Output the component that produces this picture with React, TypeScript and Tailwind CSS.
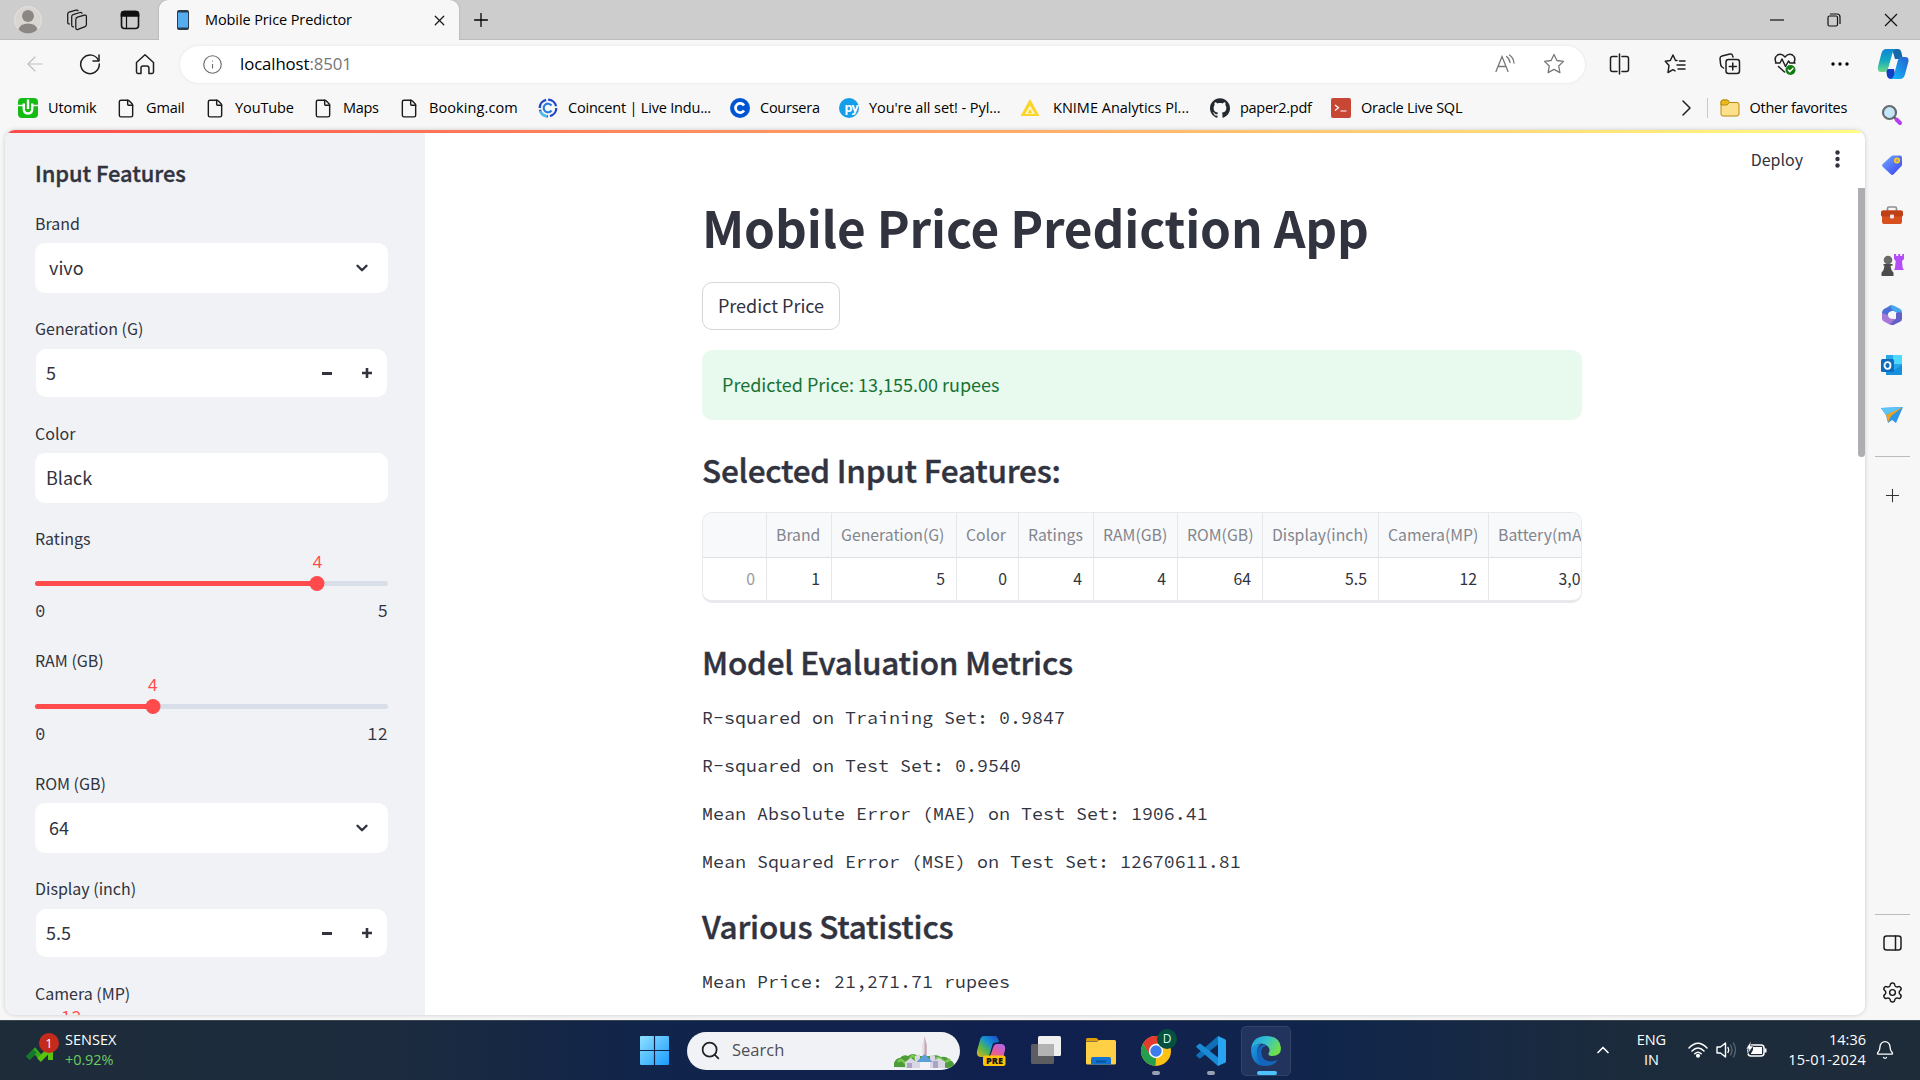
import React from 'react';
import { File, Search, Plus, X, Settings, ChevronDown, ChevronUp, Bell, ArrowLeft, Info } from 'lucide-react';
import { SiGithub } from 'react-icons/si';

const ui = "font-['Open_Sans','Noto_Sans',sans-serif]";
const app = "font-['Noto_Sans_CJK_SC','Noto_Sans',sans-serif]";
const mono = "font-['Source_Code_Pro','Liberation_Mono',monospace]";

/* ---------- browser chrome ---------- */

function TabBar() {
  return (
    <div className="flex h-10 shrink-0 bg-[#cdcdcd] shadow-[inset_0_-1px_0_#bdbdbd]">
      <div className="flex w-[159px] items-center pl-[14px]">
        <svg width="28" height="28" viewBox="0 0 28 28">
          <circle cx="14" cy="14" r="13.5" fill="#d9d6d2" stroke="#e4e2df" />
          <circle cx="14" cy="10" r="6" fill="#8b8784" />
          <path d="M4.5 23.5Q6 17.500 14 17.500t9.500 6Q19.500 27.500 14 27.500t-9.500-4z" fill="#8b8784" />
        </svg>
        <svg className="ml-[24px]" width="22" height="22" viewBox="0 0 22 22" fill="none" stroke="#1b1b1b" strokeWidth="1.250" strokeLinejoin="round">
          <path d="M11.500 8.200 18.500 6.200q1.900-.4 1.900 1.400v8.200q0 1.400-1.300 1.800L12 20.400q-2.200.7-2.200-1.600V10.400q0-1.600 1.700-2.200z" />
          <path d="M8 17.700q-2.300.4-2.300-1.700V7.500q0-1.500 1.400-1.900L14 3.500q1.600-.4 2.300 1.200" />
          <path d="M3.900 14.900q-2.200.4-2.200-1.700V5q0-1.400 1.300-1.900L10 1.100q1.600-.4 2.300 1" />
        </svg>
        <svg className="ml-[32px]" width="20" height="20" viewBox="0 0 20 20" fill="none" stroke="#111" strokeWidth="1.600">
          <rect x="1.500" y="1.500" width="17" height="17" rx="3" />
          <path d="M1.500 6V4q0-2.500 2.500-2.500h12q2.500 0 2.500 2.500v2z" fill="#111" />
          <path d="M6.500 6v12" strokeWidth="1.200" />
        </svg>
      </div>
      <div className="flex w-[300px] items-center rounded-t-[9px] bg-[#f7f7f7] pl-[18px] pr-[11px] shadow-[0_0_2px_#999]">
        <svg width="12" height="20" viewBox="0 0 12 20">
          <rect width="12" height="20" rx="2" fill="#2b3b47" />
          <rect x="1" y="2.500" width="10" height="15" fill="#55acee" />
        </svg>
        <span className={`${ui} ml-4 flex-1 whitespace-nowrap text-[14.500px] tracking-[-0.1px] text-black`}>Mobile Price Predictor</span>
        <X size={17} strokeWidth={1.8} className="text-[#1b1b1b]" />
      </div>
      <div className="flex items-center pl-[11px]"><Plus size={22} strokeWidth={1.400} /></div>
      <div className="ml-auto flex items-center">
        <div className="flex w-[57px] justify-center"><svg width="14" height="2"><path d="M0 1h14" stroke="#111" strokeWidth="1.200" /></svg></div>
        <div className="flex w-[57px] justify-center">
          <svg width="14" height="14" viewBox="0 0 14 14" fill="none" stroke="#111" strokeWidth="1.200">
            <rect x="1" y="3" width="9.500" height="10" rx="1.500" /><path d="M3 1h7q3 0 3 3v7" />
          </svg>
        </div>
        <div className="flex w-[58px] justify-center"><svg width="14" height="14" viewBox="0 0 14 14"><path d="m1 1 12 12M13 1 1 13" stroke="#111" strokeWidth="1.200" /></svg></div>
      </div>
    </div>
  );
}

const stroke = { fill: 'none', stroke: '#1f1f1f', strokeWidth: 1.5, strokeLinecap: 'round' as const, strokeLinejoin: 'round' as const };

function Toolbar() {
  return (
    <div className="flex h-12 shrink-0 items-center bg-[#f7f7f7]">
      <div className="flex w-[180px] items-center pl-[23px]">
        <ArrowLeft size={24} strokeWidth={1.100} className="text-[#bdbdbd]" />
        <svg className="ml-[32px]" width="22" height="22" viewBox="0 0 22 22" {...stroke}>
          <path d="M19.500 7.500A9.300 9.300 0 1 0 20.300 11" /><path d="M20 2v6h-6" />
        </svg>
        <svg className="ml-[34px]" width="20" height="22" viewBox="0 0 20 22" {...stroke}>
          <path d="M1.500 9.500 10 1.800l8.500 7.700V19q0 1.400-1.400 1.400h-3.200V15q0-2-2-2H8q-2 0-2 2v5.400H2.900Q1.500 20.400 1.500 19z" />
        </svg>
      </div>
      <div className="flex h-[37px] w-[1405px] items-center rounded-full bg-white pl-[22px] pr-[20px] shadow-[0_0_3px_#e2e2e2]">
        <Info size={21} strokeWidth={1.300} className="text-[#6b6b6b]" />
        <span className={`${ui} ml-[17px] flex-1 text-[16.800px] tracking-[-0.1px] text-black`}>localhost<span className="text-[#767676]">:8501</span></span>
        <svg width="20" height="20" viewBox="0 0 20 20" fill="none" stroke="#777" strokeWidth="1.300" strokeLinecap="round">
          <path d="m1 17.500 6-15 6 15M3 12.500h8M11.500 2.500q3 2 3.500 6M14.500 1q4 2.800 4.500 8" />
        </svg>
        <svg className="ml-[28px]" width="22" height="22" viewBox="0 0 22 22" fill="none" stroke="#777" strokeWidth="1.300" strokeLinejoin="round"><path d="m11 1.500 2.900 6 6.600.9-4.800 4.600 1.200 6.600-5.900-3.200-5.900 3.200L6.300 13 1.500 8.400l6.600-.9z" /></svg>
      </div>
      <div className="flex flex-1 items-center pl-[24px]">
        <svg width="21" height="22" viewBox="0 0 21 22" {...stroke}><path d="M8 3.500H3.500Q1.500 3.500 1.500 5.500v11q0 2 2 2H8M13 3.500h4.500q2 0 2 2v11q0 2-2 2H13M10.500 1v20" /></svg>
        <svg className="ml-[34px]" width="22" height="22" viewBox="0 0 22 22" {...stroke}>
          <path d="M13 7.500h-1.500L9 2 6.300 7.500l-5 .8L5 12.500 4 19.500l5-2.800 2 1.200M15.500 8H21M13 12h8M14 16h7" />
        </svg>
        <svg className="ml-[33px]" width="22" height="22" viewBox="0 0 22 22" {...stroke}>
          <path d="M4.500 15 3 14Q1.500 12.500 1.500 10.500L1 5.500Q1 3.500 3 3l8-2q2-.5 2.500 1.500l.5 1.500" /><rect x="7" y="6.500" width="13.500" height="14" rx="2.500" /><path d="M13.750 10v7M10.300 13.500h7" />
        </svg>
        <svg className="ml-[33px]" width="23" height="24" viewBox="0 0 23 24" {...stroke}>
          <path d="M1.800 10Q0 5.500 3.500 3 7.500 1 11 5q3.500-4 7.500-2 3.500 2.500 1.700 7M1.500 11H6l2-4 3.500 7.500 3-5.500 1.500 2h5M4.500 14.500 10.500 20" />
          <circle cx="16.500" cy="18" r="5" fill="#107c10" stroke="none" /><path d="m14.300 18 1.600 1.600 3-3.200" stroke="#fff" />
        </svg>
        <svg className="ml-[34px]" width="18" height="4" viewBox="0 0 18 4"><circle cx="2" cy="2" r="1.700" /><circle cx="9" cy="2" r="1.700" /><circle cx="16" cy="2" r="1.700" /></svg>
        <svg className="ml-[28px]" width="32" height="30" viewBox="0 0 32 30">
          <defs>
            <linearGradient id="cpA" x1="0" y1="0" x2="0" y2="1"><stop stopColor="#0f86d6" /><stop offset=".5" stopColor="#13a9bf" /><stop offset="1" stopColor="#6fd987" /></linearGradient>
            <linearGradient id="cpB" x1="1" y1="0" x2="0" y2="1"><stop stopColor="#2560d0" /><stop offset="1" stopColor="#12c0fb" /></linearGradient>
          </defs>
          <path d="M9 20h8l2 10h-5q-3 0-4-3z" fill="#1240c4" />
          <path d="M15 0h6q2.500 0 3.300 3l1.700 7h-8z" fill="#1668a8" />
          <path d="M9 0h10q-2.500.5-3.500 4l-4 14q-1.200 5-4.500 5H4Q0 23 1 17.500L4.500 4Q6 0 9 0z" fill="url(#cpA)" />
          <path d="M23 8h5q4.300 0 3.300 5L28 25.500q-1.500 4.500-5 4.500H12.500q3.500 0 4.500-4l3.500-13.500q.8-3.500 2.500-4.500z" fill="url(#cpB)" />
        </svg>
      </div>
    </div>
  );
}

const PageIcon = () => <File size={21} strokeWidth={1.700} className="text-[#1b1b1b]" />;

const bookmarks = [
  { t: 'Utomik', w: 'w-[98px]', k: 'tracking-[-0.1px]', i: <svg width="20" height="20" viewBox="0 0 20 20"><rect width="20" height="20" rx="4" fill="#13bb13" /><path d="M0 7.500h5M15 7.500h5" stroke="#f7f7f7" strokeWidth="1.500" /><path d="M5.800 5.500V11q0 4.500 4.200 4.500t4.200-4.500V5.500M10 1.500V11" stroke="#fff" strokeWidth="2.400" fill="none" /></svg> },
  { t: 'Gmail', w: 'w-[89px]', k: 'tracking-[-0.15px]', i: <PageIcon /> },
  { t: 'YouTube', w: 'w-[108px]', k: 'tracking-[-0.1px]', i: <PageIcon /> },
  { t: 'Maps', w: 'w-[86px]', k: 'tracking-[-0.3px]', i: <PageIcon /> },
  { t: 'Booking.com', w: 'w-[139px]', k: 'tracking-[0.1px]', i: <PageIcon /> },
  { t: 'Coincent | Live Indu...', w: 'w-[192px]', k: 'tracking-[-0.2px]', i: <svg width="20" height="20" viewBox="0 0 20 20" fill="none"><circle cx="10" cy="10" r="8.300" stroke="#2346c8" strokeWidth="2.300" strokeDasharray="11 2" /><path d="M13.500 7.500a4.300 4.300 0 1 0 0 5" stroke="#2a7fd8" strokeWidth="2.200" /><path d="M2 13a8.500 8.500 0 0 0 7 5.300" stroke="#4bc1e8" strokeWidth="2.300" /></svg> },
  { t: 'Coursera', w: 'w-[109px]', k: 'tracking-[-0.25px]', i: <svg width="20" height="20" viewBox="0 0 20 20"><circle cx="10" cy="10" r="10" fill="#0056d2" /><path d="M14 7.500a4.600 4.600 0 1 0 0 5" stroke="#fff" strokeWidth="2.700" fill="none" /></svg> },
  { t: "You're all set! - Pyl...", w: 'w-[181px]', k: 'tracking-[-0.07px]', i: <svg width="20" height="20" viewBox="0 0 20 20"><circle cx="10" cy="10" r="10" fill="#149eea" /><text x="5.500" y="14" fontSize="12.500" fontWeight="700" fontFamily="Open Sans" fill="#fff" textLength="14">py</text></svg> },
  { t: 'KNIME Analytics Pl...', w: 'w-[190px]', k: 'tracking-[0px] pl-[3px]', i: <svg width="20" height="20" viewBox="0 0 20 20"><path d="M10 1 19.500 18H.5z" fill="#fbd42a" /><path d="M10 7.500 15 16H5z" fill="#fff7d0" /><path d="m10 11 2.500 4.300h-5z" fill="#fbd42a" /></svg> },
  { t: 'paper2.pdf', w: 'w-[121px]', k: 'tracking-[-0.3px]', i: <SiGithub size={20} color="#24292f" /> },
  { t: 'Oracle Live SQL', w: 'w-[150px]', k: 'tracking-[-0.25px]', i: <svg width="20" height="20" viewBox="0 0 20 20"><rect width="20" height="20" rx="2" fill="#c74634" /><path d="m4 7 3.500 2.700L4 12.500M9.500 13h6" stroke="#fff" strokeWidth="1.200" fill="none" /></svg> },
];

function BookmarksBar() {
  return (
    <div className={`${ui} flex h-[42px] shrink-0 items-center pb-0.5 pl-[18px] text-[14.500px] text-black`}>
      {bookmarks.map((b) => (
        <div key={b.t} className={`${b.w} flex shrink-0 items-center whitespace-nowrap`}>
          <span className="flex w-5 shrink-0 justify-center">{b.i}</span>
          <span className={`ml-[10px] ${b.k}`}>{b.t}</span>
        </div>
      ))}
      <div className="ml-auto flex items-center pr-[18px]">
        <svg width="9" height="16" viewBox="0 0 9 16" {...stroke}><path d="m1 1 7 7-7 7" /></svg>
        <span className="ml-[16px] h-5 w-px bg-[#c8c8c8]" />
        <svg className="ml-[12px]" width="20" height="18" viewBox="0 0 20 18">
          <path d="M1 4V3q0-2 2-2h4.500l2 2.500H17q2 0 2 2V15q0 2-2 2H3q-2 0-2-2z" fill="#ffe08a" stroke="#b98a10" />
          <path d="M1 6V3q0-2 2-2h4.500l2 2.300L7 6z" fill="#edb81c" stroke="#b98a10" />
        </svg>
        <span className="ml-[10px] whitespace-nowrap tracking-[-0.3px]">Other favorites</span>
      </div>
    </div>
  );
}

/* ---------- edge side rail ---------- */

const railIcons = [
  <svg key="s" width="22" height="22" viewBox="0 0 22 22"><circle cx="8.500" cy="8.500" r="6.500" fill="#c4e6fb" stroke="#666b70" strokeWidth="2.200" /><path d="m13.300 13.300 2 2" stroke="#555" strokeWidth="2" /><path d="m15.500 15.500 3.500 3.500" stroke="#b63df0" strokeWidth="4" strokeLinecap="round" /></svg>,
  <svg key="t" width="22" height="22" viewBox="0 0 22 22"><defs><linearGradient id="tg" x1="0" x2="1" y1="0" y2="1"><stop stopColor="#6fb0ff" /><stop offset="1" stopColor="#3a3cf0" /></linearGradient></defs><path d="M12 1.500h7q2 0 2 2v7q0 1-.8 1.800l-7.500 8q-1.500 1.400-3 0l-8-7.500q-1.400-1.400 0-2.800l8.500-7.800q.8-.7 1.800-.7z" fill="url(#tg)" /><circle cx="16" cy="6.500" r="2.200" fill="#99a" stroke="#ffc91f" strokeWidth="1.700" /></svg>,
  <svg key="b" width="24" height="20" viewBox="0 0 24 20"><path d="M7.500 6V3.500q0-1.500 1.500-1.500h6q1.500 0 1.500 1.500V6" fill="none" stroke="#8a8f94" strokeWidth="1.700" /><rect x="2" y="5.500" width="20" height="13.500" rx="2" fill="#d9501f" /><path d="M1 7q0-1.500 1.500-1.500h19Q23 5.500 23 7v3q0 1.500-1.500 1.500h-19Q1 11.500 1 10z" fill="#bf3f17" /><rect x="10" y="9.500" width="4" height="4" rx="1" fill="#e8e8e8" /></svg>,
  <svg key="c" width="24" height="24" viewBox="0 0 24 24"><path d="M14 1h2.200v2h2V1h2v2h2V1H24v5l-2 2 .7 7 1.300 2H14l1-2 .7-7-1.700-2z" fill="#b44df5" /><circle cx="8" cy="7" r="4.300" fill="#6a6a6a" /><path d="M3.500 11h9v1.700h-2q.3 4.500 3 7V23h-12v-3.300q2.700-2.500 3-7h-1z" fill="#4c4c4c" /></svg>,
  <svg key="m" width="22" height="22" viewBox="0 0 22 22"><path d="M7.500 2.500Q10 .5 12.500 1.500l6.500 3.300q2 1.200 2 3.200v3.500l-6.500-3.500L11 6.500z" fill="#45a8ee" /><path d="M11 .8 4 4.500Q1 6 1 9v6l4.500-.5 2-5.500L12 6.500 9.500 3z" fill="#4b6fd8" /><path d="M1 9v5.500q0 2 2 3l6 3.200q2 1 4-.2l1-5.500-4-1-3-3z" fill="#a878d6" /><path d="M21 9v6q0 1.500-1.500 2.500l-7 3.500-3.500-1 6-5.500V9l3-1z" fill="#6060c8" /><circle cx="11" cy="11" r="3.800" fill="#f7f7f7" /></svg>,
  <svg key="o" width="22" height="22" viewBox="0 0 22 22"><path d="M5 1h15q1 0 1 1v18q0 1-1 1H5z" fill="#28a8ea" /><path d="M12 1h9v9h-9z" fill="#50d9ff" /><path d="m5 12 8 4 8-5v9q0 1-1 1H6q-1 0-1-1z" fill="#1490df" /><rect y="5" width="13" height="13" rx="1.500" fill="#0f6cbd" /><ellipse cx="6.500" cy="11.500" rx="3" ry="3.300" fill="none" stroke="#fff" strokeWidth="1.800" /></svg>,
  <svg key="p" width="24" height="20" viewBox="0 0 24 20"><path d="M1 3 23 2 16 18l-4-3-4 3-2-8z" fill="#2b96ea" /><path d="M1 3 23 2 6 10z" fill="#5cc4f8" /><path d="M23 2 6 10l2.500 7L11 11z" fill="#f2a31d" /></svg>,
];

function SideRail() {
  return (
    <div className="flex w-[55px] shrink-0 flex-col items-center pr-px pt-0.5">
      {railIcons.map((ic, n) => <div key={n} className="flex h-[50px] items-center">{ic}</div>)}
      <div className="mt-[16px] h-px w-[35px] bg-[#bcbcbc]" />
      <Plus size={21} strokeWidth={1.200} className="mt-[28px] text-[#333]" />
      <div className="mt-auto h-px w-[35px] bg-[#bcbcbc]" />
      <svg className="mb-[30px] mt-[20px]" width="19" height="16" viewBox="0 0 19 16" {...stroke}><rect x="1" y="1" width="17" height="14" rx="2.500" /><path d="M12.500 1v14" /></svg>
      <Settings size={23} strokeWidth={1.500} className="mb-[16px] text-[#1b1b1b]" />
    </div>
  );
}

/* ---------- input sidebar ---------- */

function Field({ label, children }: { label: string; children: React.ReactNode }) {
  return (
    <div className="h-[105px] shrink-0">
      <div className="flex h-7 items-center pt-0.5 text-[16px]">{label}</div>
      {children}
    </div>
  );
}

function SelectBox({ label, value }: { label: string; value: string }) {
  return (
    <Field label={label}>
      <div className="mt-[7px] flex h-[50px] items-center justify-between rounded-[10px] bg-white pb-px pl-[14px] pr-[17px] text-[18px]">
        {value}
        <ChevronDown size={18} strokeWidth={3.200} />
      </div>
    </Field>
  );
}

function NumberBox({ label, value }: { label: string; value: string }) {
  return (
    <Field label={label}>
      <div className="mx-px mt-2 flex h-12 items-center rounded-[10px] bg-white pl-[10px] text-[18px]">
        <span className="flex-1 pb-0.5">{value}</span>
        <span className="flex w-10 justify-center"><span className="h-[3px] w-[10px] bg-[#31333f]" /></span>
        <span className="flex w-10 justify-center"><svg width="10" height="10" viewBox="0 0 10 10"><path d="M0 5h10M5 0v10" stroke="#31333f" strokeWidth="2.600" /></svg></span>
      </div>
    </Field>
  );
}

function SliderBox({ label, value, max }: { label: string; value: number; max: number }) {
  const pct = `${(value / max) * 100}%`;
  return (
    <div className="h-[122.500px] shrink-0">
      <div className="flex h-7 items-center pt-px text-[16px]">{label}</div>
      <div className="relative h-[22px]">
        <span className={`${mono} absolute -translate-x-1/2 text-[17.500px] leading-[22px] text-[#ff4b4b]`} style={{ left: pct }}>{value}</span>
      </div>
      <div className="relative mt-2 h-[5px] rounded-full bg-[#d9dfe9]">
        <div className="h-full rounded-full bg-[#ff4b4b]" style={{ width: pct }} />
        <div className="absolute -top-[5px] size-[15px] -translate-x-1/2 rounded-full bg-[#ff4b4b]" style={{ left: pct }} />
      </div>
      <div className={`${mono} mt-[14px] flex h-[23px] items-center justify-between text-[17.500px]`}>
        <span>0</span><span>{max}</span>
      </div>
    </div>
  );
}

function InputSidebar() {
  return (
    <div className="flex w-[420px] shrink-0 flex-col overflow-hidden bg-[#f0f2f6] pl-[30px] pr-[37px]">
      <div className="flex h-[78px] shrink-0 items-center pt-[8px] text-[21.900px] font-medium tracking-[-0.05px] [-webkit-text-stroke:0.35px_#31333f]">Input Features</div>
      <SelectBox label="Brand" value="vivo" />
      <NumberBox label="Generation (G)" value="5" />
      <Field label="Color">
        <div className="mt-[7px] flex h-[50px] items-center rounded-[10px] bg-white pb-px pl-[11px] text-[18px]">Black</div>
      </Field>
      <SliderBox label="Ratings" value={4} max={5} />
      <SliderBox label="RAM (GB)" value={4} max={12} />
      <SelectBox label="ROM (GB)" value="64" />
      <NumberBox label="Display (inch)" value="5.5" />
      <SliderBox label="Camera (MP)" value={12} max={117} />
    </div>
  );
}

/* ---------- main content ---------- */

const columns = [
  { h: '', v: '0', w: 'w-[64px]' },
  { h: 'Brand', v: '1', w: 'w-[65px]' },
  { h: 'Generation(G)', v: '5', w: 'w-[125px]' },
  { h: 'Color', v: '0', w: 'w-[62px]' },
  { h: 'Ratings', v: '4', w: 'w-[75px]' },
  { h: 'RAM(GB)', v: '4', w: 'w-[84px]' },
  { h: 'ROM(GB)', v: '64', w: 'w-[85px]' },
  { h: 'Display(inch)', v: '5.5', w: 'w-[116px]' },
  { h: 'Camera(MP)', v: '12', w: 'w-[110px]' },
  { h: 'Battery(mAh)', v: '3,000', w: 'w-[121px]' },
];

function DataTable() {
  return (
    <div className="flex h-[91px] overflow-hidden rounded-[10px] border border-b-[3px] border-[#e8e9ed] text-[15.800px]">
      {columns.map((c, n) => (
        <div key={n} className={`${c.w} shrink-0 border-r border-[#e6e7ea]`}>
          <div className="flex h-[45px] items-center border-b border-[#e0e1e5] bg-[#f8f9fb] pb-px pl-[9px] text-[#83858d]">{c.h}</div>
          <div className={n === 0 ? 'flex h-[43px] items-center justify-end pb-px pr-[11px] text-[#9a9ba2]' : 'flex h-[43px] items-center justify-end pb-px pr-[11px]'}>{c.v}</div>
        </div>
      ))}
    </div>
  );
}

const metrics = [
  'R-squared on Training Set: 0.9847',
  'R-squared on Test Set: 0.9540',
  'Mean Absolute Error (MAE) on Test Set: 1906.41',
  'Mean Squared Error (MSE) on Test Set: 12670611.81',
];

const heading = 'flex items-center text-[31.500px] font-medium tracking-[-0.23px] [-webkit-text-stroke:0.4px_#31333f]';

function MainContent() {
  return (
    <div className="relative flex-1 overflow-hidden bg-white">
      <div className="flex h-[60px] items-center justify-end pb-0.5 pr-[25px]">
        <span className="text-[16px]">Deploy</span>
        <svg className="ml-[32px]" width="5" height="18" viewBox="0 0 5 18" fill="#31333f"><circle cx="2.500" cy="2.500" r="2.200" /><circle cx="2.500" cy="9" r="2.200" /><circle cx="2.500" cy="15.500" r="2.200" /></svg>
      </div>
      <div className="ml-[277px] w-[880px] whitespace-nowrap">
        <div className="flex h-[73px] items-center pt-0.5 text-[49.500px] font-bold tracking-[-0.14px]">Mobile Price Prediction App</div>
        <div className="mt-[19px] flex h-12 w-[138px] items-center justify-center rounded-[10px] border border-[#d6d6d8] pb-px text-[18px]">Predict Price</div>
        <div className="mt-5 flex h-[70px] items-center rounded-[10px] bg-[#e8f9ee] pb-0.5 pl-5 text-[18px] text-[#177233]">Predicted Price: 13,155.00 rupees</div>
        <div className={`${heading} h-[92px] pt-[8px]`}>Selected Input Features:</div>
        <DataTable />
        <div className={`${heading} h-[91px] pt-[27px]`}>Model Evaluation Metrics</div>
        <div className={`${mono} text-[18.330px]`}>
          {metrics.map((m) => <div key={m} className="flex h-12 items-center">{m}</div>)}
        </div>
        <div className={`${heading} h-20`}>Various Statistics</div>
        <div className={`${mono} flex h-8 items-center text-[18.330px]`}>Mean Price: 21,271.71 rupees</div>
      </div>
      <div className="absolute right-0 top-[58px] h-[269px] w-[7px] rounded-b-full bg-[#adadb2]" />
    </div>
  );
}

/* ---------- taskbar ---------- */

function Taskbar() {
  return (
    <div className={`${ui} flex h-[60px] shrink-0 items-center border-t border-[#3a4650] bg-[linear-gradient(90deg,#1e2c3a_0%,#1c2b3d_20%,#11244b_34%,#10204f_55%,#11264b_70%,#1c2b3b_85%,#1e2c3a_100%)] text-white`}>
      <div className="flex w-[640px] items-center pb-px pl-[26px]">
        <div className="relative pb-1">
          <svg width="28" height="30" viewBox="0 0 28 30" fill="none"><path d="m2 25 7-7 6 7 10-10" stroke="#35a81c" strokeWidth="5" /><path d="m2 25 7-7" stroke="#15782a" strokeWidth="5" /><path d="m13 27 11.500-11.500V27" stroke="#5bc213" strokeWidth="5" /></svg>
          <span className="absolute left-[13px] top-0 flex size-5 items-center justify-center rounded-full bg-[#c42b1c] text-[13px] leading-5">1</span>
        </div>
        <div className="ml-[11px] text-[14.500px] leading-5"><div>SENSEX</div><div className="tracking-[-0.1px] text-[#6ccb5f]">+0.92%</div></div>
      </div>
      <svg width="29" height="29" viewBox="0 0 29 29"><defs><linearGradient id="win" x1="0" y1="0" x2="1" y2="1"><stop stopColor="#8fe1ff" /><stop offset="1" stopColor="#1a9cff" /></linearGradient></defs><path d="M0 1q0-1 1-1h12.900v13.900H0zM15.100 0H28q1 0 1 1v12.900H15.100zM0 15.100h13.900V29H1q-1 0-1-1zM15.100 15.100H29V28q0 1-1 1H15.100z" fill="url(#win)" /></svg>
      <div className="ml-[18px] flex h-[38px] w-[273px] items-center overflow-hidden rounded-full bg-[#f1f2f6] pl-[13px] pr-[4px] text-[#4d4f55]">
        <Search size={21} strokeWidth={2} className="text-[#222]" />
        <span className="ml-[11px] flex-1 text-[16.500px]">Search</span>
        <svg width="63" height="36" viewBox="0 0 63 36">
          <path d="M1 34v-4q2-5 6-5 3-4 8-2 5-4 10 0h14q5-2 9 1 6-1 8 3 5 1 5 5v3z" fill="#4d9c3a" />
          <path d="M5 29q3-4 6 0t6-3 6 1M42 26q4-3 7 1t8-1" fill="none" stroke="#7cc653" strokeWidth="2.500" />
          <path d="M12 35v-6l6-4 4 3v-5l5-2v14zM37 35V22l5 1v4l4-2 6 4v6z" fill="#d9d6e6" />
          <path d="M14 30h5v5h-5zM40 28h5v7h-5z" fill="#a9a5c2" />
          <path d="M29.300 34V12l2.200-9L33.700 12v22z" fill="#e9dce2" /><path d="m31.500 3 2.200 9v12h-2.200z" fill="#c4a7b4" />
          <path d="m31.500 21 8 8H23.500z" fill="#5c9fd6" /><path d="M27 29h10v6H27z" fill="#f3f1f7" />
        </svg>
      </div>
      <svg className="ml-[16px]" width="30" height="30" viewBox="0 0 30 30">
        <defs><linearGradient id="cp1" x1="0" y1="1" x2="1" y2="0"><stop stopColor="#e9b21c" /><stop offset=".35" stopColor="#54b64b" /><stop offset=".6" stopColor="#1592d6" /><stop offset="1" stopColor="#1b49c4" /></linearGradient><linearGradient id="cp2" x1="0" y1="1" x2="1" y2="0"><stop stopColor="#f67a4b" /><stop offset=".5" stopColor="#e25ba5" /><stop offset="1" stopColor="#a56af0" /></linearGradient></defs>
        <path d="M8 0h12q2 1 3 6l-6 1-3 10q-1 4-4 4H4q-4-1-3-6L4 4q1-4 4-4z" fill="url(#cp1)" />
        <path d="M21 8h5q4 1 3 6l-2 8H11q3-1 4-4l2-6q1-4 4-4z" fill="url(#cp2)" />
        <rect x="7" y="19.500" width="22.500" height="10.500" rx="2" fill="#fcc30b" /><text x="10" y="28.200" fontSize="9.500" fontWeight="800" fontFamily="Open Sans" textLength="17" lengthAdjust="spacingAndGlyphs" fill="#111">PRE</text>
      </svg>
      <svg className="ml-[25px]" width="30" height="29" viewBox="0 0 30 29"><rect y="8" width="23" height="20" rx="1.500" fill="#5b5d60" /><rect x="7" width="23" height="20" rx="1.500" fill="#efefef" /><path d="M7 8h16v12H7z" fill="#b3b3b4" /></svg>
      <svg className="ml-[25px]" width="30" height="28" viewBox="0 0 30 28"><path d="M0 2.500Q0 1 1.500 1h9L13.500 4H0z" fill="#e09d0a" /><path d="M0 4.500h11L14 3h14.500Q30 3 30 4.500V26q0 1.500-1.500 1.500h-27Q0 27.500 0 26z" fill="#ffcf45" /><path d="M5 27.500V22q0-2 2-2h16q2 0 2 2v5.500z" fill="#1173cf" /><path d="M10 25.500v-2h10v2z" fill="#0c4f9e" /></svg>
      <div className="relative ml-[25px]">
        <svg width="30" height="30" viewBox="0 0 30 30"><circle cx="15" cy="15" r="15" fill="#fbc116" /><path d="M2 7.500A15 15 0 0 1 28 7.500H15L8.500 18.700z" fill="#e33b2e" /><path d="M2 7.500 8.700 18.500 15 22l-.5 8A15 15 0 0 1 2 7.500z" fill="#269f4c" /><circle cx="15" cy="15" r="7.200" fill="#fff" /><circle cx="15" cy="15" r="5.700" fill="#3b7ded" /></svg>
        <span className="absolute -top-[7px] left-[16px] flex size-5 items-center justify-center rounded-full bg-[#05503f] text-[12px] leading-5 text-[#cfe]">D</span>
        <span className="absolute -bottom-[9px] left-[11px] h-1 w-2 rounded-full bg-[#9aa0b4]" />
      </div>
      <div className="relative ml-[25px]">
        <svg width="30" height="30" viewBox="0 0 30 30"><path d="M22 0 29 3.200q1 .5 1 1.500v20.600q0 1-1 1.500L22 30z" fill="#29a4f0" /><path d="M22 0v8.500L4.500 22.300q-.6.500-1.300 0l-2.500-2.100q-.9-.8 0-1.600z" fill="#0f6fb8" /><path d="M22 30v-8.500L4.500 7.700q-.6-.5-1.300 0L.7 9.800q-.9.800 0 1.600z" fill="#1b8ad6" /></svg>
        <span className="absolute -bottom-[9px] left-[11px] h-1 w-2 rounded-full bg-[#9aa0b4]" />
      </div>
      <div className="relative ml-[15px] flex h-[50px] w-[50px] items-center justify-center rounded-[5px] border border-[#33446a] bg-[#22335d]">
        <svg width="30" height="30" viewBox="0 0 30 30">
          <defs><linearGradient id="eg1" x1="0" y1="0" x2="1" y2=".5"><stop stopColor="#1b9de2" /><stop offset=".5" stopColor="#35c1d0" /><stop offset="1" stopColor="#6fe04b" /></linearGradient><linearGradient id="eg2" x1="0" y1="0" x2="1" y2="1"><stop stopColor="#1f9fe8" /><stop offset="1" stopColor="#0b58ab" /></linearGradient></defs>
          <path d="M0 14Q1 0 15 0t15 12q0 8-9 8-4 0-3.500-2.500Q20 14 17 10.500 11 5 4 9.500 1 11.500 0 14z" fill="url(#eg1)" />
          <path d="M0 14Q3 7.500 10 8q-4 3-4 9 .5 9 10 13-15 1-16-16z" fill="url(#eg2)" />
          <path d="M10.500 14Q9 24 19 25.500q4 .3 8-2Q23 30 15 30 6 28 6 18q0-7 5.500-9.300Q14 8 16 9.700q-4.500.3-5.500 4.300z" fill="#1565bd" />
        </svg>
        <span className="absolute bottom-0 left-[15px] h-1 w-5 rounded-full bg-[#4cc2ff]" />
      </div>
      <div className="ml-auto flex items-center pb-px pr-[25px] text-[14.500px] leading-5">
        <ChevronUp size={20} strokeWidth={2} />
        <div className="ml-[23px] w-[30px] text-center tracking-[-0.2px]"><div>ENG</div><div>IN</div></div>
        <svg className="ml-[22px]" width="20" height="16" viewBox="0 0 20 16" fill="none" stroke="#fff" strokeWidth="1.500" strokeLinecap="round"><path d="M1 6q9-9.500 18 0M4 9q6-6 12 0M6.800 11.700q3.200-3 6.400 0" /><circle cx="10" cy="13.700" r="1.300" fill="#fff" /></svg>
        <svg className="ml-[8px]" width="22" height="18" viewBox="0 0 22 18" fill="none" stroke="#fff" strokeWidth="1.400" strokeLinejoin="round" strokeLinecap="round"><path d="M1 6h3.500L9.500 2v14L4.500 12H1zM12 6.500q1.500 2.500 0 5" /><path d="M14.500 4q3 5 0 10M17.500 2q4 7 0 14" stroke="#56636f" /></svg>
        <svg className="ml-[8px]" width="21" height="18" viewBox="0 0 21 18"><rect x="2" y="4" width="16" height="11" rx="3" fill="none" stroke="#fff" strokeWidth="1.500" /><path d="M5 12.500 7 9V6h9v7H5z" fill="#fff" /><path d="M19.500 7.500v4" stroke="#fff" strokeWidth="2" /><path d="M5 0 0 8h3L1.500 13 7.500 5h-3z" fill="#fff" stroke="#1e2c3a" strokeWidth=".6" /></svg>
        <div className="ml-[21px] text-right"><div>14:36</div><div className="tracking-[0.2px]">15-01-2024</div></div>
        <Bell size={20} strokeWidth={1.600} className="ml-[9px]" />
      </div>
    </div>
  );
}

export default function App() {
  return (
    <div className="flex h-[1080px] w-[1920px] flex-col overflow-hidden bg-[#f7f7f7]">
      <TabBar />
      <Toolbar />
      <div className="flex h-[932px] shrink-0">
        <div className="flex w-[1865px] shrink-0 flex-col pb-[5px]">
          <BookmarksBar />
          <div className={`${app} relative ml-[5px] flex flex-1 overflow-hidden rounded-[10px] text-[#31333f] shadow-[0_0_4px_#c8c8c8]`}>
            <InputSidebar />
            <MainContent />
            <div className="absolute inset-x-0 top-0 h-[3px] bg-[linear-gradient(90deg,#ff4b4b,#fffd80)]" />
          </div>
        </div>
        <SideRail />
      </div>
      <Taskbar />
    </div>
  );
}
